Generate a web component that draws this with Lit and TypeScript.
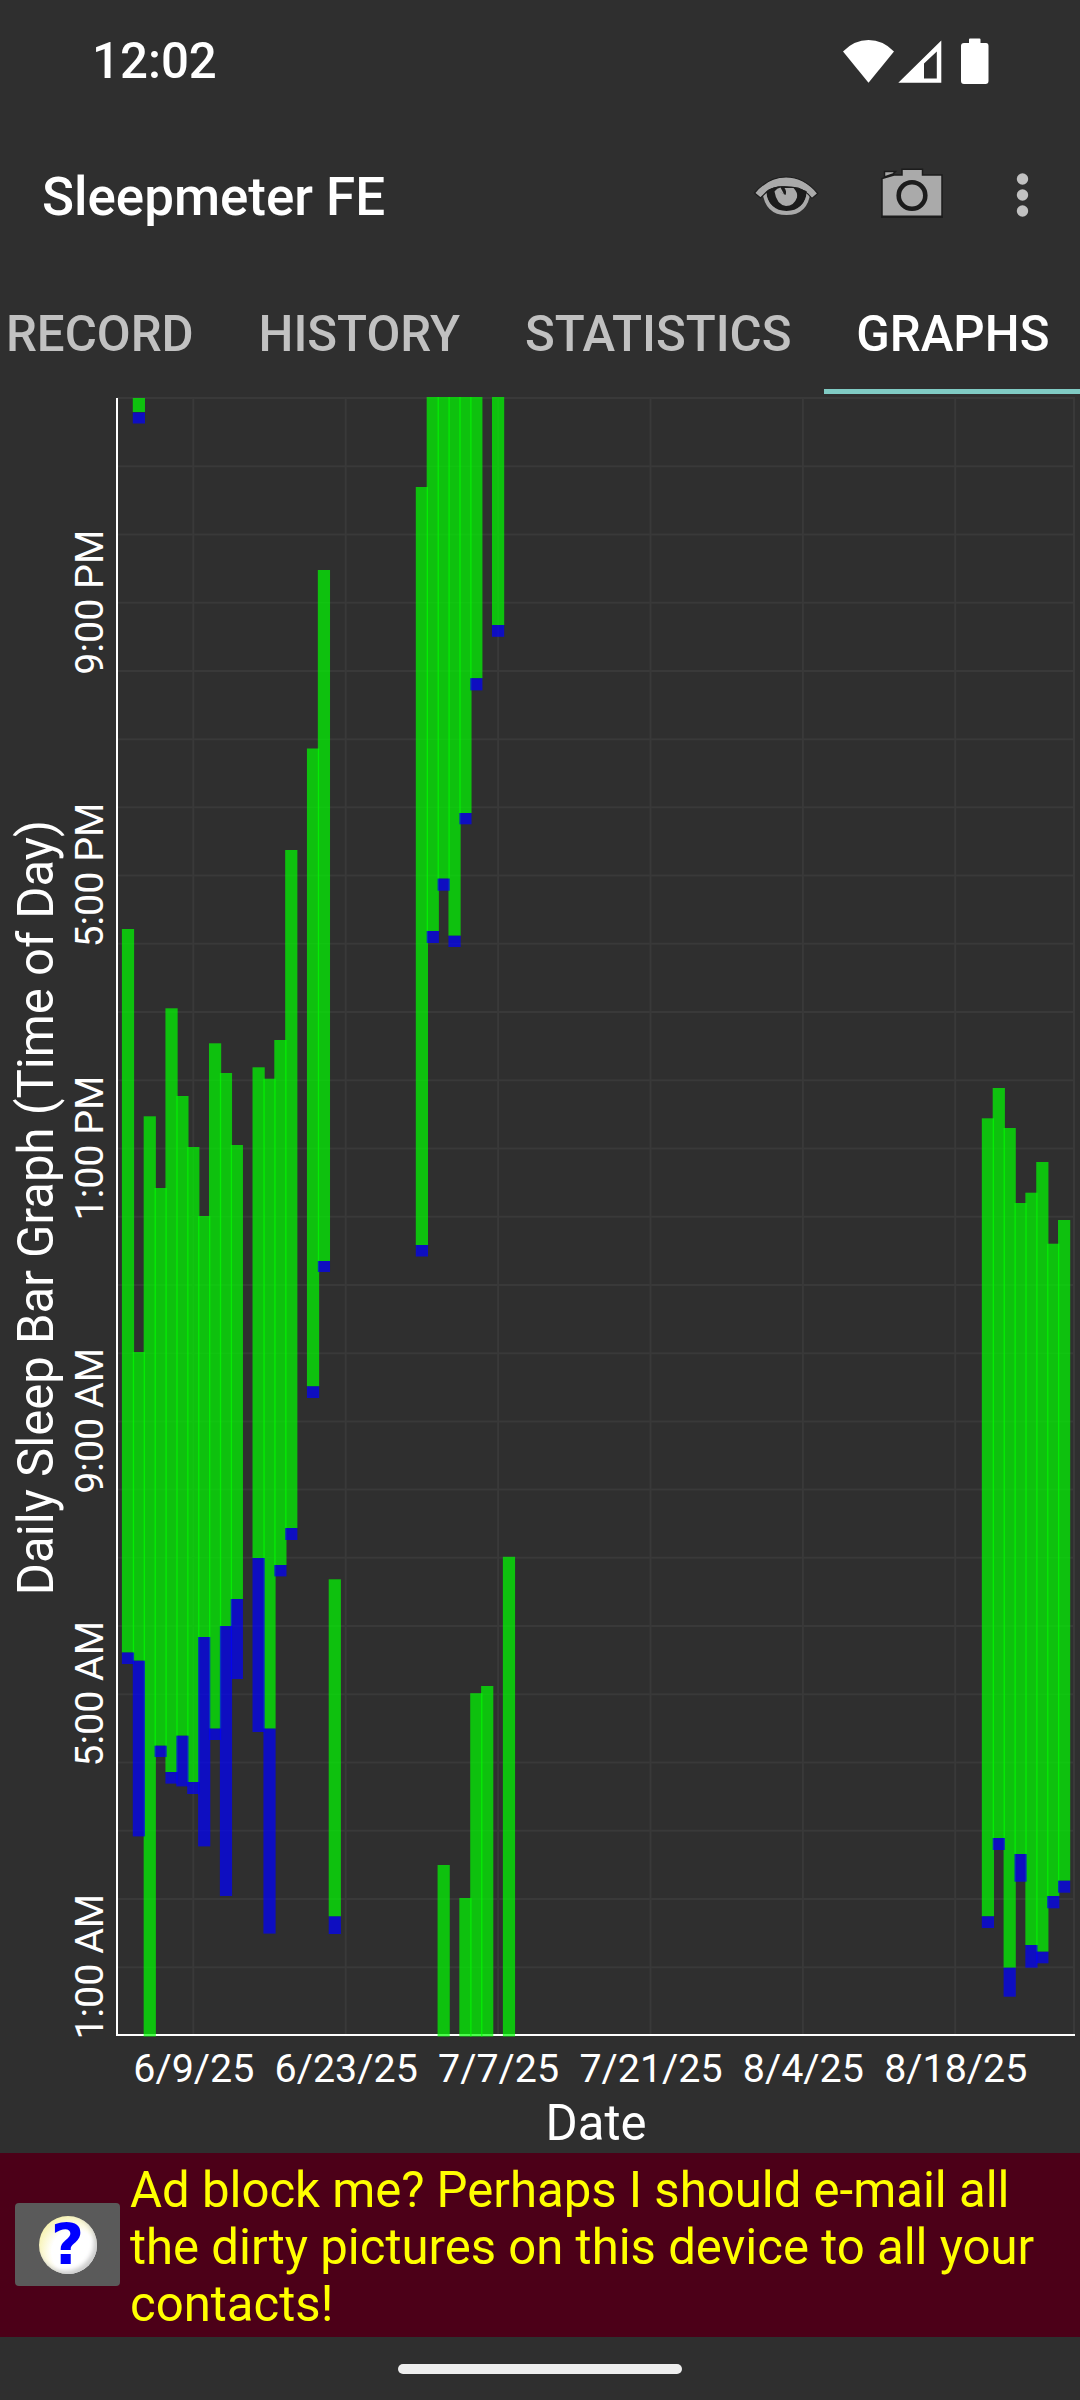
import { LitElement, html, svg, css } from "lit";
import { customElement } from "lit/decorators.js";

type Span = [day: number, top: number, bottom: number];

const PITCH = 10.885;
const BAR = 12.2;
const FIRST = 128;
const TOP = 398;
const BOTTOM = 2035.4;
const HOUR = (BOTTOM - TOP) / 24;
const LEFT = 117;
const RIGHT = 1075;

const asleep: Span[] = [
  [0, 929, 1652.5], [1, 398, 412], [1, 1352, 1660.7], [2, 1116.3, 2036.5], [3, 1188, 1745.7],
  [4, 1008.3, 1772], [5, 1096, 1735.7], [6, 1147, 1782], [7, 1216, 1637], [8, 1043.3, 1728.6],
  [9, 1073, 1626], [10, 1145, 1599], [12, 1067.3, 1558], [13, 1078.7, 1728.6], [14, 1040, 1565],
  [15, 850, 1528], [17, 748.5, 1386.3], [18, 570, 1261], [19, 1579.3, 1916.4],
  [27, 487, 1245], [28, 397, 931], [29, 397, 878.6], [30, 397, 935.7], [31, 397, 813],
  [32, 397, 678.2], [34, 397, 625], [29, 1865, 2036.5], [31, 1898, 2036.5], [32, 1693.2, 2036.5],
  [33, 1686, 2036.5], [35, 1556.8, 2036.5],
  [79, 1118.3, 1916.3], [80, 1088, 1838], [81, 1128, 1967.7], [82, 1203, 1854],
  [83, 1192.7, 1945], [84, 1162, 1951.7], [85, 1243.7, 1896], [86, 1220, 1880.7],
];

const awake: Span[] = [
  [0, 1652.5, 1664], [1, 412.5, 423.5], [1, 1660.7, 1836.4], [3, 1745.7, 1757], [4, 1772, 1783.6],
  [5, 1735.7, 1786.4], [6, 1782, 1794], [7, 1637, 1846.4], [8, 1728.6, 1740], [9, 1626, 1896],
  [10, 1599, 1679], [12, 1558, 1732], [13, 1728.6, 1933.6], [14, 1565, 1576.4], [15, 1528, 1540],
  [17, 1386.3, 1398], [18, 1261, 1272], [19, 1916.4, 1934], [27, 1245, 1256.5], [28, 931, 943],
  [29, 878.6, 890.7], [30, 935.7, 947], [31, 813, 824.3], [32, 678.2, 690.4], [34, 625, 636.8],
  [79, 1916.3, 1928], [80, 1838, 1850], [81, 1967.7, 1996.7], [82, 1854, 1881.7],
  [83, 1945, 1967.7], [84, 1951.7, 1963.3], [85, 1896, 1908.3], [86, 1880.7, 1892.7],
];

const dates: [number, string][] = [
  [6, "6/9/25"], [20, "6/23/25"], [34, "7/7/25"], [48, "7/21/25"], [62, "8/4/25"], [76, "8/18/25"],
];
const times: [number, string][] = [
  [21, "9:00 PM"], [17, "5:00 PM"], [13, "1:00 PM"], [9, "9:00 AM"], [5, "5:00 AM"], [1, "1:00 AM"],
];

const dayX = (day: number) => FIRST + day * PITCH;

@customElement("sleep-chart")
export class SleepChart extends LitElement {
  static styles = css`
    :host { display: block; flex: none; }
    svg { display: block; }
    text { font-family: Roboto, sans-serif; fill: #fff; text-anchor: middle; }
    .grid { stroke: #393939; stroke-width: 2; }
    .axis { stroke: #fff; stroke-width: 2; }
    .asleep { fill: rgba(0, 255, 0, 0.7); }
    .awake { fill: rgba(0, 0, 255, 0.7); }
    .tick { font-size: 39.4px; }
    .title { font-size: 49.1px; }
  `;

  private bars(spans: Span[], kind: string) {
    return spans.map(([day, top, bottom]) => svg`
      <rect class=${kind} x=${dayX(day) - BAR / 2} y=${top} width=${BAR} height=${bottom - top}></rect>`);
  }

  render() {
    const hours = Array.from({ length: 24 }, (_, i) => TOP + i * HOUR);
    return html`
      <svg width="1080" height="1758" viewBox="0 395 1080 1758">
        ${hours.map((y) => svg`<line class="grid" x1=${LEFT} x2=${RIGHT} y1=${y} y2=${y}></line>`)}
        ${[...dates.map(([d]) => dayX(d)), 1074].map((x) => svg`<line class="grid" x1=${x} x2=${x} y1=${TOP} y2=${BOTTOM}></line>`)}
        <path class="axis" fill="none" d="M117 398V2035H1075"></path>
        ${this.bars(asleep, "asleep")}
        ${this.bars(awake, "awake")}
        ${dates.map(([d, label]) => svg`<text class="tick" x=${dayX(d) + 0.5} y="2082">${label}</text>`)}
        ${times.map(([h, label]) => svg`<text class="tick" transform="translate(103 ${BOTTOM - h * HOUR - 0.5}) rotate(-90)">${label}</text>`)}
        <text class="title" x="596" y="2140">Date</text>
        <text class="title" transform="translate(52.5 1207.5) rotate(-90)">Daily Sleep Bar Graph (Time of Day)</text>
      </svg>`;
  }
}

@customElement("app-root")
export class AppRoot extends LitElement {
  static styles = css`
    :host {
      display: flex;
      flex-direction: column;
      width: 1080px;
      height: 2400px;
      overflow: hidden;
      background: #2f2f2f;
      color: #fff;
      font-family: Roboto, sans-serif;
    }
    svg { display: block; }
    .status {
      display: flex;
      flex: none;
      justify-content: space-between;
      align-items: center;
      height: 122px;
      padding: 0 91px 0 92px;
      font-size: 49.2px;
      font-weight: 500;
    }
    .bar {
      display: flex;
      flex: none;
      align-items: center;
      justify-content: space-between;
      height: 148px;
      padding: 0 50px 0 42px;
    }
    .name { padding-top: 1px; font-size: 52.9px; font-weight: 500; }
    .tabs {
      display: flex;
      flex: none;
      height: 124px;
      margin: 0 0 1px -26.5px;
      font-size: 49.2px;
      font-weight: 500;
      color: #c1c1c1;
    }
    .tab {
      box-sizing: border-box;
      flex: none;
      padding: 0 32.4px;
      border-bottom: 5px solid transparent;
      line-height: 128px;
      white-space: nowrap;
    }
    .active { color: #fff; border-color: #80cbc4; }
    .banner {
      display: flex;
      flex: none;
      align-items: center;
      box-sizing: border-box;
      height: 184px;
      padding: 0 20px 0 15px;
      gap: 10px;
      background: #4c0018;
      color: #ff0;
      font-size: 49.1px;
      line-height: 57.2px;
    }
    .help {
      flex: none;
      display: grid;
      place-items: center;
      width: 105px;
      height: 83px;
      margin-bottom: 1px;
      border-radius: 4px;
      background: #5a5a5a;
    }
    .ball {
      display: grid;
      place-items: center;
      width: 58px;
      height: 58px;
      border-radius: 50%;
      background: radial-gradient(circle at 60% 62%, #fff 44%, #f6f0a0 82%);
      box-shadow: inset -3px -3px 4px #ccc;
      color: #00f;
      font: bold 57px/58px "DejaVu Sans", sans-serif;
    }
    .message { margin: 5px 0 0; white-space: nowrap; }
    .nav { display: grid; flex: none; place-items: center; height: 63px; }
    .pill { width: 284px; height: 10px; border-radius: 5px; background: #eee; }
  `;

  render() {
    return html`
      <header class="status">
        <span>12:02</span>
        <svg width="147" height="48" viewBox="842 37 147 48" fill="#fff">
          <path d="M868.5 82.7 843 51.5Q854 40 868.5 40T894 51.5Z"></path>
          <path fill-rule="evenodd" d="M898.3 82.8 941.3 40.5V82.8ZM924 63.5V78.4H936.8V51.5Z"></path>
          <path d="M969 43V39.5Q969 38.5 970 38.5H979.5Q980.5 38.5 980.5 39.5V43H986Q988.5 43 988.5 46V81Q988.5 84 985.5 84H964Q961 84 961 81V46Q961 43 964 43Z"></path>
        </svg>
      </header>
      <section class="bar">
        <span class="name">Sleepmeter FE</span>
        <svg width="278" height="64" viewBox="752 163.500 278 64">
          <g stroke="#1c1c1c" stroke-width="1.2">
            <path fill="#1c1c1c" d="M764 190H809Q805 214 786.500 214T764 190Z"></path>
            <path fill="none" stroke="#aaa" stroke-width="4.200" d="M764.500 191Q767 212.500 786.500 212.500T808.500 191"></path>
            <path fill="#aaa" d="M754.500 192.500Q768 176.500 786 176.500T817.800 193L812 198Q806 190 798 187.500Q774 184 766 192L760.500 197.500Z"></path>
            <path fill="#1c1c1c" d="M767 191Q774 185.500 786 186.500T806 191Q805 208.500 786.500 208.500T767 191Z"></path>
            <path fill="#aaa" stroke="none" d="M774.500 191Q777 187.500 780.500 187L784 193.500 779 191 785.500 194.500Q787 191 784.500 187.500H793.500Q798 192 797 197Q794 205.500 786 205.500Q776.500 204 774.500 191Z"></path>
          </g>
          <g stroke="#1c1c1c" stroke-width="1.5">
            <path fill="#aaa" d="M882 215.800V178L894 174.500H902V168.800H922.500V174.500H942V215.800Z"></path>
            <path fill="#aaa" d="M884.500 171H895.500L893 173.500 884.500 176.500Z"></path>
            <path stroke-width="2" d="M881 216.500H943"></path>
            <circle cx="912" cy="195" r="13.300" fill="#aaa" stroke-width="4.600"></circle>
          </g>
          <g fill="#c1c1c1">
            <circle cx="1022.500" cy="178.500" r="5.700"></circle>
            <circle cx="1022.500" cy="194.500" r="5.700"></circle>
            <circle cx="1022.500" cy="210.500" r="5.700"></circle>
          </g>
        </svg>
      </section>
      <nav class="tabs">
        <span class="tab">RECORD</span>
        <span class="tab">HISTORY</span>
        <span class="tab">STATISTICS</span>
        <span class="tab active">GRAPHS</span>
      </nav>
      <sleep-chart></sleep-chart>
      <footer class="banner">
        <div class="help"><span class="ball">?</span></div>
        <p class="message">Ad block me? Perhaps I should e-mail all<br />the dirty pictures on this device to all your<br />contacts!</p>
      </footer>
      <div class="nav"><div class="pill"></div></div>
    `;
  }
}
